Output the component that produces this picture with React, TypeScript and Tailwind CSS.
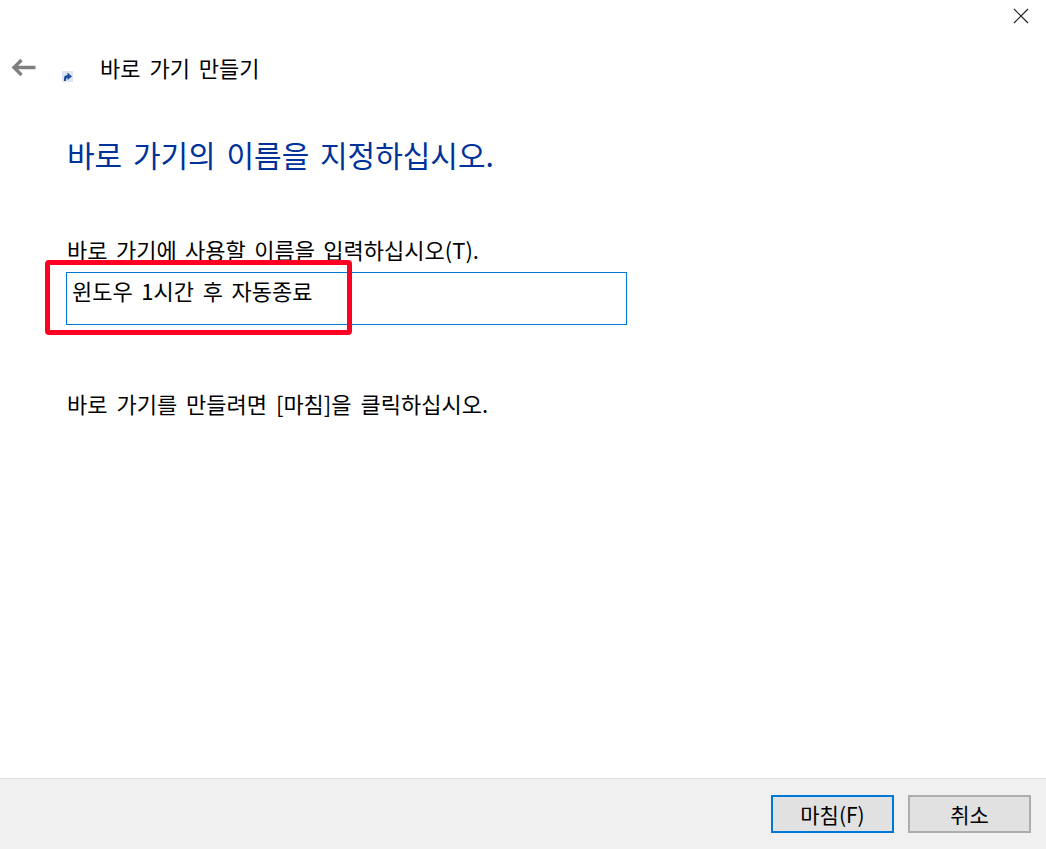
import React from "react";

const font = "font-['Noto_Sans_CJK_KR','Noto_Sans',sans-serif]";

export default function App() {
  return (
    <div className={`flex flex-col w-[1046px] h-[849px] bg-white text-black overflow-hidden ${font}`}>
      <div className="flex justify-end h-[31px] pt-[8px] pr-[17px]">
        <svg width="16" height="16" viewBox="0 0 16 16" stroke="#222" strokeWidth="1.2" fill="none">
          <path d="M1 1 L15 15 M15 1 L1 15" />
        </svg>
      </div>
      <div className="flex items-center h-[46px] mt-[15px] pl-[11px]">
        <svg className="mb-[3px]" width="25" height="19" viewBox="0 0 25 19" stroke="#808080" strokeWidth="3.4" fill="none">
          <path d="M24.5 9.5 H3 M10.5 2 L3 9.5 L10.5 17" />
        </svg>
        <svg className="ml-[26px] mt-[15px]" width="11" height="11" viewBox="0 0 11 11">
          <rect x="0" y="0" width="11" height="11" fill="#dfe6f0" />
          <path d="M2 10 V7 C2 5 3.5 4 5.5 4 V1.5 L10 5.5 L5.5 9 V6.8 C4.5 6.8 4 7.5 4 10 Z" fill="#1f4f9c" />
        </svg>
        <span className="ml-[27px] mb-[4px] text-[22px] leading-none [word-spacing:4px]">바로 가기 만들기</span>
      </div>
      <h1 className="mt-[42px] pl-[67px] text-[30px] leading-[40px] font-normal text-[#003399] [word-spacing:4px]">
        바로 가기의 이름을 지정하십시오.
      </h1>
      <p className="mt-[61px] pl-[67px] text-[22px] leading-[28px] [word-spacing:3.5px]">바로 가기에 사용할 이름을 입력하십시오(T).</p>
      <div className="relative mt-[9px] ml-[66px] w-[561px] h-[53px] border border-[#0078d7] pl-[5px] pt-[3px] text-[22px] leading-[28px] [word-spacing:3.7px]">
        윈도우 1시간 후 자동종료
        <div className="absolute left-[-22px] top-[-13px] w-[307px] h-[75px] border-[5px] border-[#ff0022] rounded-[4px]" />
      </div>
      <p className="mt-[64px] pl-[67px] text-[22px] leading-[28px] [word-spacing:4px]">바로 가기를 만들려면 [마침]을 클릭하십시오.</p>
      <div className="mt-auto flex justify-end gap-[14px] h-[71px] bg-[#f0f0f0] border-t border-[#dfdfdf] pt-[16px] pr-[15px]">
        <button className="w-[123px] h-[38px] bg-[#e1e1e1] border-2 border-[#0078d7] text-[21px] leading-none">마침(F)</button>
        <button className="w-[123px] h-[38px] bg-[#e1e1e1] border-2 border-[#adadad] text-[21px] leading-none">취소</button>
      </div>
    </div>
  );
}
